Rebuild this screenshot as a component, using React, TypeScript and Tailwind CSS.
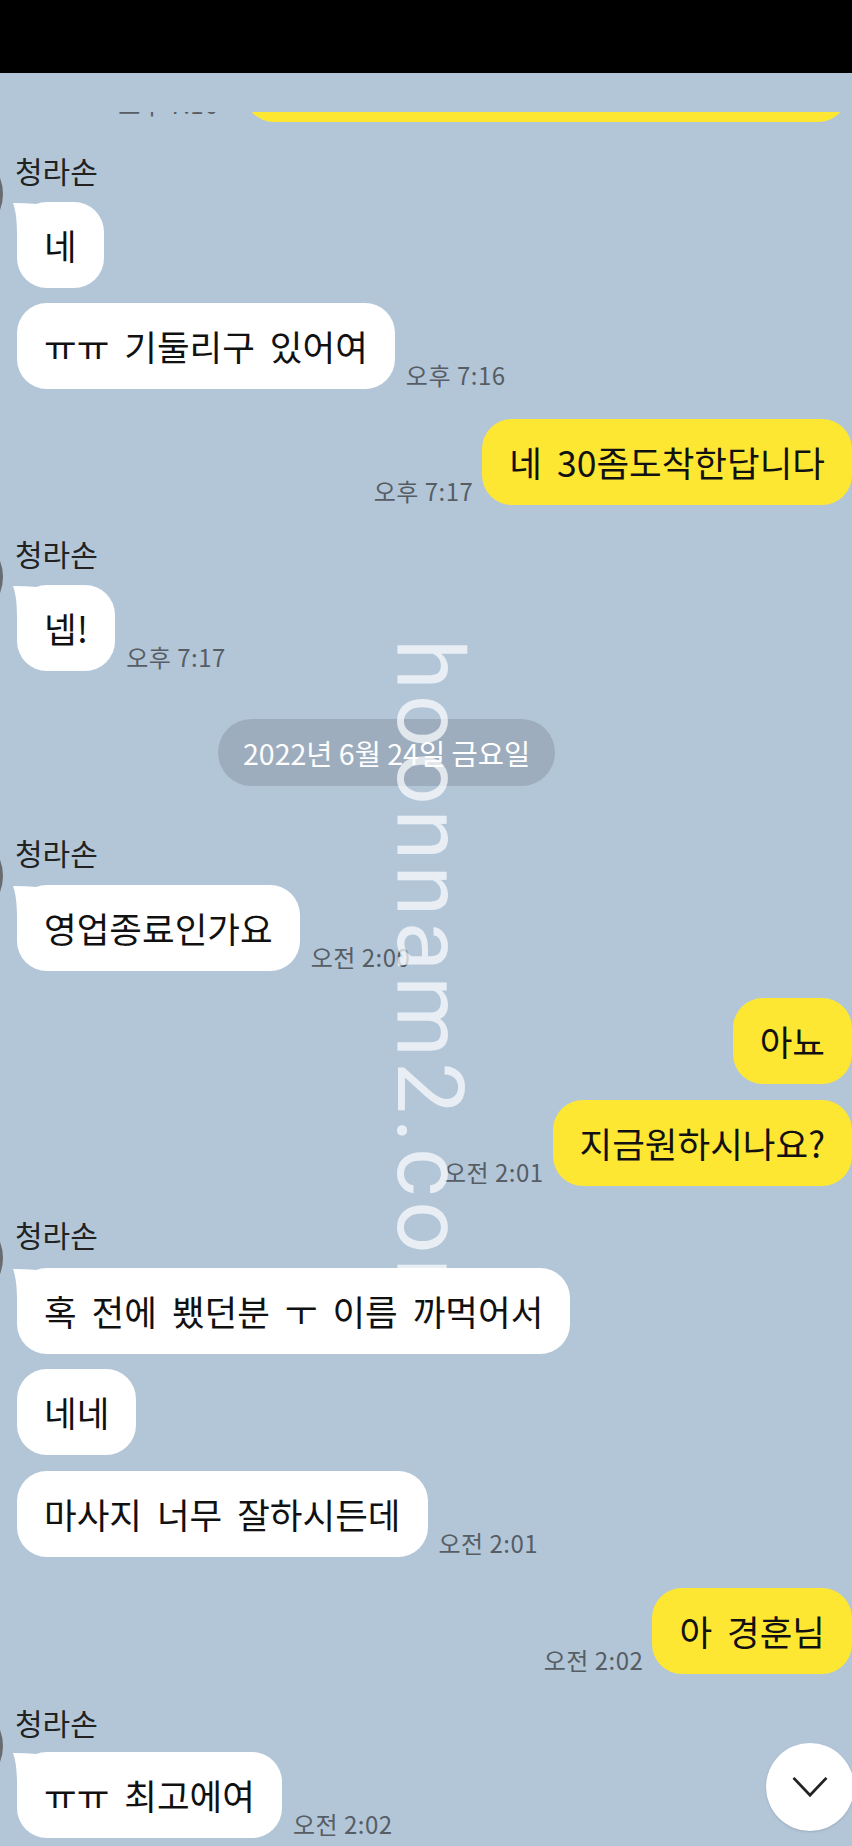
import type { ReactNode } from 'react'

function Tail() {
  return (
    <svg className="absolute -left-[4px] top-0 h-[32px] w-[24px]" viewBox="0 0 24 32">
      <path d="M0 1 C8 1 16 1.5 24 2 L24 32 L4 32 C4 20 3 9 0 1 Z" fill="#ffffff" />
    </svg>
  )
}

function Bubble({ text, mine, tail }: { text: string; mine?: boolean; tail?: boolean }) {
  return (
    <div
      className={`relative z-20 flex h-[86px] shrink-0 items-center whitespace-nowrap rounded-[30px] px-[27px] text-[35.5px] leading-[40px] text-[#111] [word-spacing:7px] ${
        mine ? 'bg-[#fee733]' : 'bg-white'
      }`}
    >
      {tail && <Tail />}
      <span className="relative">{text}</span>
    </div>
  )
}

function Time({ children, className = 'mb-[1px]' }: { children: ReactNode; className?: string }) {
  return (
    <span className={`${className} whitespace-nowrap text-[24px] leading-[26px] tracking-[0.5px] text-[#575d64]`}>
      {children}
    </span>
  )
}

function OtherRow({ text, time, tail, mt }: { text: string; time?: string; tail?: boolean; mt: string }) {
  return (
    <div className={`ml-[2px] flex items-end gap-[11px] ${mt}`}>
      <Bubble text={text} tail={tail} />
      {time && <Time>{time}</Time>}
    </div>
  )
}

function MyRow({ text, time, mt }: { text: string; time?: string; mt: string }) {
  return (
    <div className={`flex items-end justify-end gap-[9px] ${mt}`}>
      {time && <Time>{time}</Time>}
      <Bubble text={text} mine />
    </div>
  )
}

function OtherGroup({ mt, children }: { mt: string; children: ReactNode }) {
  return (
    <div className={`flex items-start ${mt}`}>
      <div className="-ml-[87px] -mt-[5px] h-[90px] w-[90px] shrink-0 rounded-full bg-[#686c71]" />
      <div className="flex flex-col pl-[12px]">
        <div className="text-[30px] leading-[32px] text-[#222]">청라손</div>
        {children}
      </div>
    </div>
  )
}

export default function App() {
  return (
    <div className="relative h-[1846px] w-[852px] overflow-hidden bg-[#b2c6d8] font-['Noto_Sans_CJK_KR','Noto_Sans',sans-serif]">
      <div className="h-[73px] bg-black" />

      <div className="flex flex-col">
        {/* tail end of the previous message, cut off by the top bar */}
        <div className="mt-[39px] flex h-[10px] items-end justify-end gap-[26px] overflow-hidden pr-[4px]">
          <Time className="mb-[5px]">오후 7:16</Time>
          <div className="h-[86px] w-[604px] shrink-0 rounded-[30px] bg-[#fee733]" />
        </div>

        <OtherGroup mt="mt-[32px]">
          <OtherRow mt="mt-[16px]" text="네" tail />
          <OtherRow mt="mt-[15px]" text="ㅠㅠ 기둘리구 있어여" time="오후 7:16" />
        </OtherGroup>

        <MyRow mt="mt-[30px]" text="네 30좀도착한답니다" time="오후 7:17" />

        <OtherGroup mt="mt-[32px]">
          <OtherRow mt="mt-[16px]" text="넵!" time="오후 7:17" tail />
        </OtherGroup>

        <div className="ml-[218px] mt-[48px] flex h-[67px] items-center self-start rounded-full bg-[#9dadbe] px-[25px] text-[28.5px] leading-[32px] text-white">
          2022년 6월 24일 금요일
        </div>

        <OtherGroup mt="mt-[50px]">
          <OtherRow mt="mt-[17px]" text="영업종료인가요" time="오전 2:00" tail />
        </OtherGroup>

        <MyRow mt="mt-[27px]" text="아뇨" />
        <MyRow mt="mt-[16px]" text="지금원하시나요?" time="오전 2:01" />

        <OtherGroup mt="mt-[32px]">
          <OtherRow mt="mt-[18px]" text="혹 전에 뵀던분 ㅜ 이름 까먹어서" tail />
          <OtherRow mt="mt-[15px]" text="네네" />
          <OtherRow mt="mt-[16px]" text="마사지 너무 잘하시든데" time="오전 2:01" />
        </OtherGroup>

        <MyRow mt="mt-[31px]" text="아 경훈님" time="오전 2:02" />

        <OtherGroup mt="mt-[32px]">
          <OtherRow mt="mt-[14px]" text="ㅠㅠ 최고에여" time="오전 2:02" tail />
        </OtherGroup>
      </div>

      {/* watermark */}
      <div className="absolute left-[475px] top-[639px] z-10 origin-top-left rotate-90 whitespace-nowrap font-['Roboto',sans-serif] text-[92px] leading-[92px] tracking-[5px] text-white/70">
        hoonnam2.com
      </div>

      <button className="absolute left-[766px] top-[1743px] z-30 flex h-[88px] w-[88px] items-center justify-center rounded-full bg-white shadow-sm">
        <svg viewBox="0 0 40 24" className="h-[22px] w-[38px]">
          <polyline points="2,2 20,21 38,2" fill="none" stroke="#222" strokeWidth="3" />
        </svg>
      </button>
    </div>
  )
}
